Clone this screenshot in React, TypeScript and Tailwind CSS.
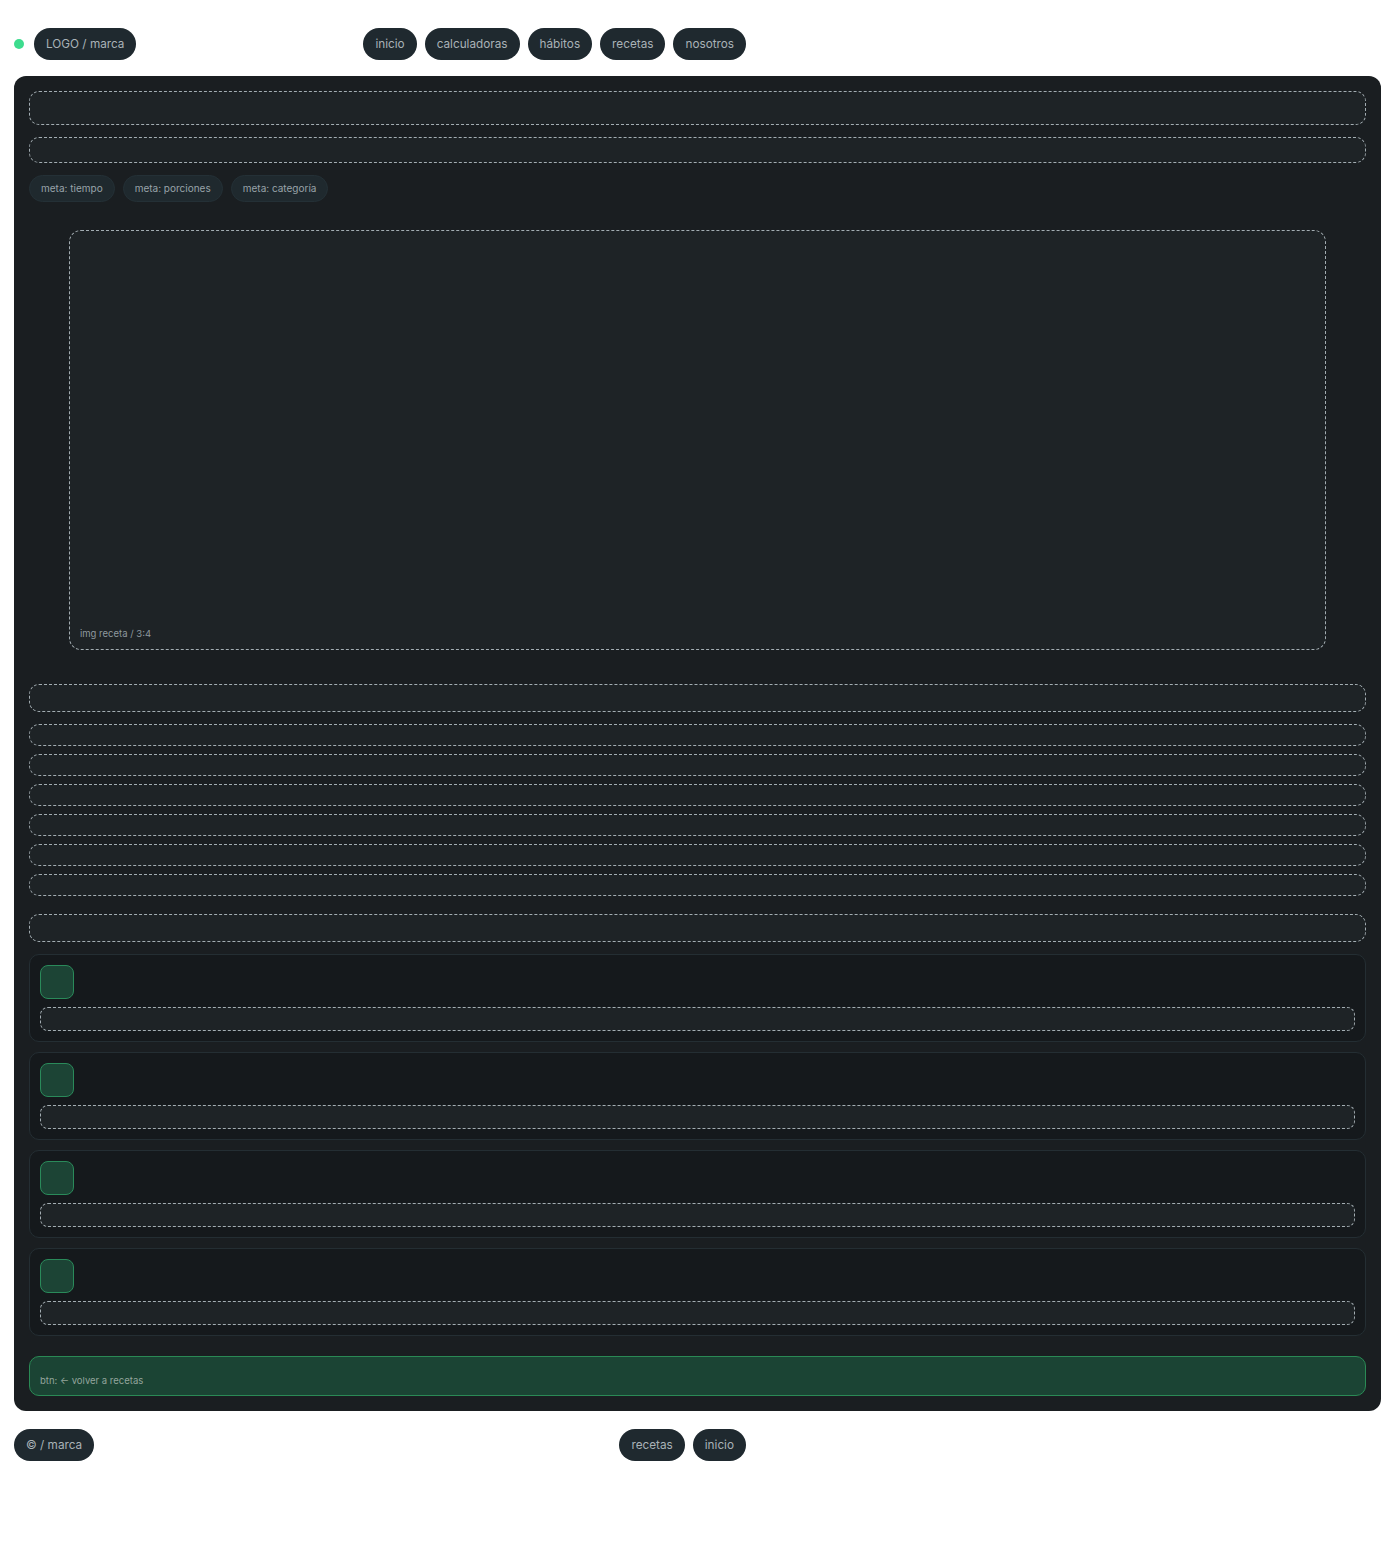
const NAV = ["inicio", "calculadoras", "hábitos", "recetas", "nosotros"];
const META = ["meta: tiempo", "meta: porciones", "meta: categoría"];

function Pill({ children }: { children: React.ReactNode }) {
  return (
    <span className="h-8 px-3 pt-[2px] rounded-full bg-[#1f292f] text-[#a9b2b7] text-[11.75px] flex items-center whitespace-nowrap">
      {children}
    </span>
  );
}

function Dashed({ h, className = "" }: { h: string; className?: string }) {
  return (
    <div className={`${h} rounded-[10px] border border-dashed border-[#a3adb2] bg-[#1e2326] ${className}`} />
  );
}

function StepCard() {
  return (
    <div className="rounded-[10px] border border-[#242e33] bg-[#15191c] p-[10px] flex flex-col gap-2">
      <div className="w-[34px] h-[34px] rounded-lg bg-[#1c4435] border border-[#2a8a5a]" />
      <div className="h-6 rounded-lg border border-dashed border-[#a3adb2] bg-[#1e2326]" />
    </div>
  );
}

export default function App() {
  return (
    <div className="min-h-screen bg-white px-[14px] pt-7 pb-20 font-['Inter',_'Liberation_Sans',_sans-serif]">
      {/* Header */}
      <header className="w-[732px] flex items-center justify-between">
        <div className="flex items-center gap-[10px]">
          <span className="w-[10px] h-[10px] rounded-full bg-[#3ddc8e]" />
          <Pill>LOGO / marca</Pill>
        </div>
        <nav className="flex items-center gap-2">
          {NAV.map((n) => (
            <Pill key={n}>{n}</Pill>
          ))}
        </nav>
      </header>

      {/* Main panel */}
      <main className="mt-4 rounded-xl bg-[#1a1e21] p-[15px] flex flex-col">
        <Dashed h="h-[34px]" />
        <Dashed h="h-[26px]" className="mt-3" />
        <div className="mt-3 flex gap-2">
          {META.map((m) => (
            <span
              key={m}
              className="h-[27px] px-[11px] rounded-full bg-[#1f292e] border border-[#243036] text-[10px] text-[#98a3a9] flex items-center"
            >
              {m}
            </span>
          ))}
        </div>

        <div className="mt-7 mx-10 h-[420px] rounded-xl border border-dashed border-[#a3adb2] bg-[#1e2326] flex items-end px-[10px] pb-[8px]">
          <span className="text-[9.5px] text-[#8e999f]">img receta / 3:4</span>
        </div>

        <Dashed h="h-[28px]" className="mt-[34px]" />
        <div className="mt-3 flex flex-col gap-2">
          {[0, 1, 2, 3, 4, 5].map((i) => (
            <Dashed key={i} h="h-[22px]" />
          ))}
        </div>
        <Dashed h="h-[28px]" className="mt-[18px]" />

        <div className="mt-3 flex flex-col gap-[10px]">
          {[0, 1, 2, 3].map((i) => (
            <StepCard key={i} />
          ))}
        </div>

        <button className="mt-5 h-10 rounded-[10px] bg-[#1b4434] border border-[#2a8a55] flex items-end px-[10px] pb-[7px] text-left">
          <span className="text-[9.5px] text-[#93a59c]">btn: ← volver a recetas</span>
        </button>
      </main>

      {/* Footer */}
      <footer className="mt-[18px] w-[732px] flex items-center justify-between">
        <Pill>© / marca</Pill>
        <div className="flex items-center gap-2">
          <Pill>recetas</Pill>
          <Pill>inicio</Pill>
        </div>
      </footer>
    </div>
  );
}
